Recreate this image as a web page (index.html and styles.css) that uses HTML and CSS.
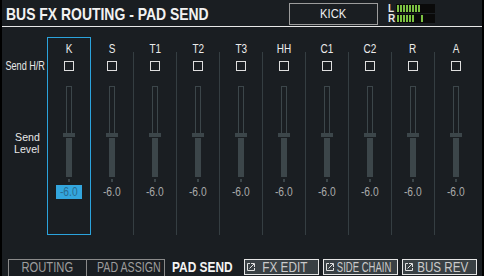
FILE: index.html
```html
<!DOCTYPE html>
<html>
<head>
<meta charset="utf-8">
<link rel="stylesheet" href="styles.css">
</head>
<body>
<div class="screen">
  <header class="hdr">
    <h1 class="title"><span class="sq-title">BUS FX ROUTING - PAD SEND</span></h1>
    <div class="inst"><span class="sq sq86">KICK</span></div>
    <div class="meter">
      <div class="mrow"><span class="ml">L</span>
        <svg class="mbar" width="39" height="9" viewBox="0 0 39 9"><rect width="39" height="9" fill="#0a0a0a"/><g fill="#7cc142"><rect x="1" y="1" width="2" height="7"/><rect x="4" y="1" width="2" height="7"/><rect x="7" y="1" width="2" height="7"/><rect x="10" y="1" width="2" height="7"/><rect x="13" y="1" width="2" height="7"/><rect x="16" y="1" width="2" height="7"/><rect x="19" y="1" width="2" height="7"/><rect x="22" y="1" width="2" height="7"/></g></svg>
      </div>
      <div class="mrow"><span class="ml">R</span>
        <svg class="mbar" width="39" height="9" viewBox="0 0 39 9"><rect width="39" height="9" fill="#0a0a0a"/><g fill="#7cc142"><rect x="1" y="1" width="2" height="7"/><rect x="4" y="1" width="2" height="7"/><rect x="7" y="1" width="2" height="7"/><rect x="10" y="1" width="2" height="7"/><rect x="13" y="1" width="2" height="7"/><rect x="16" y="1" width="2" height="7"/><rect x="25" y="1" width="2" height="7"/></g></svg>
      </div>
    </div>
  </header>

  <main class="main">
    <div class="labels">
      <div class="lab-hr"><span class="sq sq70">Send H/R</span></div>
      <div class="lab-lvl">
        <div class="lvl-line"><span class="sq sq92">Send</span></div>
        <div class="lvl-line"><span class="sq sq92">Level</span></div>
      </div>
    </div>

    <div class="col sel">
      <div class="name"><span class="sq sq80">K</span></div><div class="chk"></div>
      <svg class="fader" width="12" height="96" viewBox="0 0 12 96"><rect x="3.5" y="0.5" width="5" height="47" fill="none" stroke="#3c464a"/><g fill="#3c464a"><rect x="0" y="47" width="12" height="4"/><rect x="3" y="52" width="6" height="39"/><rect x="5" y="93" width="2" height="3"/></g></svg>
      <div class="val"><span class="sq sq82">-6.0</span></div>
    </div>
    <div class="col">
      <div class="name"><span class="sq sq80">S</span></div><div class="chk"></div>
      <svg class="fader" width="12" height="96" viewBox="0 0 12 96"><rect x="3.5" y="0.5" width="5" height="47" fill="none" stroke="#3c464a"/><g fill="#3c464a"><rect x="0" y="47" width="12" height="4"/><rect x="3" y="52" width="6" height="39"/><rect x="5" y="93" width="2" height="3"/></g></svg>
      <div class="val"><span class="sq sq82">-6.0</span></div>
    </div>
    <div class="col">
      <div class="name"><span class="sq sq80">T1</span></div><div class="chk"></div>
      <svg class="fader" width="12" height="96" viewBox="0 0 12 96"><rect x="3.5" y="0.5" width="5" height="47" fill="none" stroke="#3c464a"/><g fill="#3c464a"><rect x="0" y="47" width="12" height="4"/><rect x="3" y="52" width="6" height="39"/><rect x="5" y="93" width="2" height="3"/></g></svg>
      <div class="val"><span class="sq sq82">-6.0</span></div>
    </div>
    <div class="col">
      <div class="name"><span class="sq sq80">T2</span></div><div class="chk"></div>
      <svg class="fader" width="12" height="96" viewBox="0 0 12 96"><rect x="3.5" y="0.5" width="5" height="47" fill="none" stroke="#3c464a"/><g fill="#3c464a"><rect x="0" y="47" width="12" height="4"/><rect x="3" y="52" width="6" height="39"/><rect x="5" y="93" width="2" height="3"/></g></svg>
      <div class="val"><span class="sq sq82">-6.0</span></div>
    </div>
    <div class="col">
      <div class="name"><span class="sq sq80">T3</span></div><div class="chk"></div>
      <svg class="fader" width="12" height="96" viewBox="0 0 12 96"><rect x="3.5" y="0.5" width="5" height="47" fill="none" stroke="#3c464a"/><g fill="#3c464a"><rect x="0" y="47" width="12" height="4"/><rect x="3" y="52" width="6" height="39"/><rect x="5" y="93" width="2" height="3"/></g></svg>
      <div class="val"><span class="sq sq82">-6.0</span></div>
    </div>
    <div class="col">
      <div class="name"><span class="sq sq80">HH</span></div><div class="chk"></div>
      <svg class="fader" width="12" height="96" viewBox="0 0 12 96"><rect x="3.5" y="0.5" width="5" height="47" fill="none" stroke="#3c464a"/><g fill="#3c464a"><rect x="0" y="47" width="12" height="4"/><rect x="3" y="52" width="6" height="39"/><rect x="5" y="93" width="2" height="3"/></g></svg>
      <div class="val"><span class="sq sq82">-6.0</span></div>
    </div>
    <div class="col">
      <div class="name"><span class="sq sq80">C1</span></div><div class="chk"></div>
      <svg class="fader" width="12" height="96" viewBox="0 0 12 96"><rect x="3.5" y="0.5" width="5" height="47" fill="none" stroke="#3c464a"/><g fill="#3c464a"><rect x="0" y="47" width="12" height="4"/><rect x="3" y="52" width="6" height="39"/><rect x="5" y="93" width="2" height="3"/></g></svg>
      <div class="val"><span class="sq sq82">-6.0</span></div>
    </div>
    <div class="col">
      <div class="name"><span class="sq sq80">C2</span></div><div class="chk"></div>
      <svg class="fader" width="12" height="96" viewBox="0 0 12 96"><rect x="3.5" y="0.5" width="5" height="47" fill="none" stroke="#3c464a"/><g fill="#3c464a"><rect x="0" y="47" width="12" height="4"/><rect x="3" y="52" width="6" height="39"/><rect x="5" y="93" width="2" height="3"/></g></svg>
      <div class="val"><span class="sq sq82">-6.0</span></div>
    </div>
    <div class="col">
      <div class="name"><span class="sq sq80">R</span></div><div class="chk"></div>
      <svg class="fader" width="12" height="96" viewBox="0 0 12 96"><rect x="3.5" y="0.5" width="5" height="47" fill="none" stroke="#3c464a"/><g fill="#3c464a"><rect x="0" y="47" width="12" height="4"/><rect x="3" y="52" width="6" height="39"/><rect x="5" y="93" width="2" height="3"/></g></svg>
      <div class="val"><span class="sq sq82">-6.0</span></div>
    </div>
    <div class="col">
      <div class="name"><span class="sq sq80">A</span></div><div class="chk"></div>
      <svg class="fader" width="12" height="96" viewBox="0 0 12 96"><rect x="3.5" y="0.5" width="5" height="47" fill="none" stroke="#3c464a"/><g fill="#3c464a"><rect x="0" y="47" width="12" height="4"/><rect x="3" y="52" width="6" height="39"/><rect x="5" y="93" width="2" height="3"/></g></svg>
      <div class="val"><span class="sq sq82">-6.0</span></div>
    </div>
  </main>

  <footer class="ftr">
    <div class="tab tab1"><span class="sq sq80">ROUTING</span></div>
    <div class="tab tab2"><span class="sq sq76">PAD ASSIGN</span></div>
    <div class="cur"><span class="sq-left">PAD SEND</span></div>
    <div class="btn"><svg class="ico" width="10" height="10" viewBox="0 0 10 10"><path d="M4 1.5H1.5V8.5H8.5V6" fill="none" stroke="#e0e0e0"/><path d="M3.5 6.5L8 2" fill="none" stroke="#e0e0e0"/><path d="M5 1.5H8.5V5" fill="none" stroke="#e0e0e0"/></svg><span class="btxt"><span class="sq sq84">FX EDIT</span></span></div>
    <div class="btn"><svg class="ico" width="10" height="10" viewBox="0 0 10 10"><path d="M4 1.5H1.5V8.5H8.5V6" fill="none" stroke="#e0e0e0"/><path d="M3.5 6.5L8 2" fill="none" stroke="#e0e0e0"/><path d="M5 1.5H8.5V5" fill="none" stroke="#e0e0e0"/></svg><span class="btxt"><span class="sq sq68">SIDE CHAIN</span></span></div>
    <div class="btn"><svg class="ico" width="10" height="10" viewBox="0 0 10 10"><path d="M4 1.5H1.5V8.5H8.5V6" fill="none" stroke="#e0e0e0"/><path d="M3.5 6.5L8 2" fill="none" stroke="#e0e0e0"/><path d="M5 1.5H8.5V5" fill="none" stroke="#e0e0e0"/></svg><span class="btxt"><span class="sq sq83">BUS REV</span></span></div>
  </footer>
</div>
</body>
</html>
```

FILE: styles.css
```css
* { box-sizing: border-box; margin: 0; padding: 0; }

body {
  background: #000;
  width: 484px;
  height: 276px;
  overflow: hidden;
  font-family: "Liberation Sans", Arial, sans-serif;
}

/* horizontal squeeze to imitate the condensed device font */
.sq { display: inline-block; white-space: nowrap; transform-origin: 50% 50%; }
.sq68 { transform: scaleX(0.68); }
.sq70 { transform: scaleX(0.7); }
.sq76 { transform: scaleX(0.76); }
.sq80 { transform: scaleX(0.8); }
.sq82 { transform: scaleX(0.82); }
.sq83 { transform: scaleX(0.83); }
.sq84 { transform: scaleX(0.84); }
.sq86 { transform: scaleX(0.86); }
.sq92 { transform: scaleX(0.92); }

.screen {
  margin-left: 2px;
  width: 480px;
  height: 276px;
  background: #1a1e22;
  display: flex;
  flex-direction: column;
}

/* header */
.hdr {
  height: 27px;
  border-bottom: 1px solid #e8e8e8;
  display: flex;
  align-items: flex-start;
  padding-right: 47px;
}
.title {
  font-size: 17px;
  font-weight: bold;
  color: #f2f2f2;
  line-height: 20px;
  margin: 5px 0 0 4px;
  white-space: nowrap;
}
.sq-title {
  display: inline-block;
  transform: scaleX(0.82);
  transform-origin: 0 50%;
}
.inst {
  margin-left: auto;
  margin-top: 3px;
  width: 89px;
  height: 22px;
  border: 1px solid #9c9c9c;
  color: #f0f0f0;
  font-size: 13px;
  line-height: 20px;
  text-align: center;
}
.meter {
  margin: 4px 0 0 10px;
  display: flex;
  flex-direction: column;
  gap: 1px;
}
.mrow { display: flex; height: 9px; }
.ml {
  width: 8px;
  font-size: 10px;
  font-weight: bold;
  line-height: 9px;
  color: #e8e8e8;
}
.mbar { display: block; }

/* main */
.main {
  height: 232px;
  display: flex;
  align-items: flex-start;
}
.labels {
  width: 45px;
  color: #e8e8e8;
  padding-top: 32px;
  display: flex;
  flex-direction: column;
}
.lab-hr {
  height: 14px;
  line-height: 14px;
  font-size: 13px;
  display: flex;
  justify-content: center;
  padding-left: 1px;
}
.lab-lvl {
  margin-top: 58px;
  padding-left: 5px;
  font-size: 11.5px;
}
.lvl-line {
  height: 12px;
  line-height: 12px;
  display: flex;
  justify-content: center;
}

.col {
  width: 43px;
  height: 198px;
  margin-top: 10px;
  padding: 1px 0 0 1px;
  display: flex;
  flex-direction: column;
  align-items: center;
  background: linear-gradient(#353e42, #353e42) left 15px / 1px calc(100% - 15px) no-repeat;
}
.col.sel {
  width: 44px;
  margin-right: -1px;
  padding: 0;
  border: 1px solid #2ba3dc;
  background: none;
  position: relative;
  z-index: 1;
}
.name {
  margin-top: 4px;
  height: 14px;
  line-height: 14px;
  font-size: 12.5px;
  color: #ececec;
  text-align: center;
}
.chk {
  margin-top: 5px;
  width: 10px;
  height: 10px;
  border: 1px solid #dedede;
}
.fader { display: block; margin-top: 15px; }
.val {
  margin-top: 3px;
  width: 26px;
  height: 14px;
  line-height: 14px;
  font-size: 12.5px;
  text-align: center;
  color: #a9a9a9;
}
.sel .val { background: #33a6de; color: #2a6b90; }

/* footer */
.ftr {
  height: 17px;
  display: flex;
  align-items: flex-start;
  padding-left: 6px;
}
.tab {
  height: 17px;
  border: 1px solid #8a8a8a;
  border-bottom: none;
  color: #9d9d9d;
  font-size: 14px;
  line-height: 15px;
  text-align: center;
  white-space: nowrap;
}
.tab1 { width: 79px; }
.tab2 { width: 78px; border-left: none; }
.cur {
  width: 79px;
  padding: 1px 0 0 7px;
  font-size: 14px;
  font-weight: bold;
  line-height: 15px;
  color: #f4f4f4;
  white-space: nowrap;
}
.sq-left {
  display: inline-block;
  transform: scaleX(0.85);
  transform-origin: 0 50%;
}
.btn {
  width: 75px;
  height: 16px;
  margin-right: 4px;
  border: 1px solid #e6e6e6;
  background: #394044;
  display: flex;
  align-items: center;
  padding: 0 4px 0 1px;
}
.ico { display: block; flex: none; }
.btxt {
  flex: 1;
  min-width: 0;
  display: flex;
  justify-content: center;
  font-size: 14px;
  line-height: 14px;
  color: #cacaca;
  white-space: nowrap;
}
```
